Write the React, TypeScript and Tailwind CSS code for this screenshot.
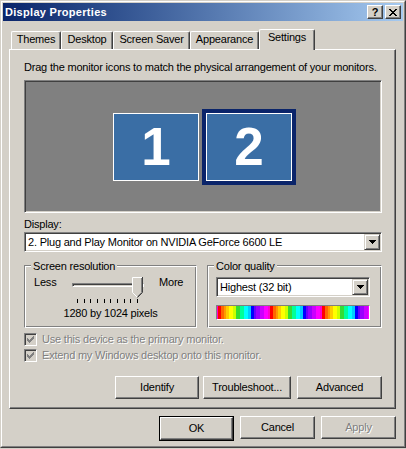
import React from "react";

const cycle: [string, number][] = [
  ["#ff0000", 3],
  ["#ff6600", 3],
  ["#ff9900", 2],
  ["#ffcc00", 3],
  ["#ffff00", 4],
  ["#ccff00", 3],
  ["#33dd33", 4],
  ["#00ff99", 4],
  ["#00ffff", 4],
  ["#00ccff", 3],
  ["#0000ff", 3],
  ["#6600ff", 2],
  ["#9900ff", 4],
  ["#cc00ff", 4],
  ["#ff00ff", 4],
  ["#ff00cc", 2],
];
const stripes: [string, number][] = [["#ff00cc", 1], ...cycle, ...cycle, ...cycle];

const xPixels = [
  "XX....XX",
  ".XX..XX.",
  "..XXXX..",
  "...XX...",
  "..XXXX..",
  ".XX..XX.",
  "XX....XX",
];
const checkPixels = [
  "......X",
  ".....XX",
  "X...XXX",
  "XX.XXX.",
  "XXXXX..",
  ".XXX...",
  "..X....",
];

function PixelGlyph({ rows, color }: { rows: string[]; color: string }) {
  const w = rows[0].length;
  const h = rows.length;
  return (
    <svg width={w} height={h} viewBox={`0 0 ${w} ${h}`} shapeRendering="crispEdges">
      {rows.flatMap((r, y) =>
        r.split("").map((c, x) => (c === "X" ? <rect key={`${x}-${y}`} x={x} y={y} width={1} height={1} fill={color} /> : null))
      )}
    </svg>
  );
}

function CaptionBtn({ children, className }: { children: React.ReactNode; className?: string }) {
  return (
    <div
      className={`w-[16px] h-[14px] bg-[#d4d0c8] border border-t-white border-l-white border-r-[#404040] border-b-[#404040] shadow-[inset_-1px_-1px_#808080] flex items-center justify-center text-black ${className ?? ""}`}
    >
      {children}
    </div>
  );
}

function Tab({ className, children }: { className: string; children: React.ReactNode }) {
  return (
    <div
      className={`h-[18px] bg-[#d4d0c8] border-t border-l border-r border-t-white border-l-white border-r-[#404040] shadow-[inset_-1px_0_#808080] rounded-t-[2px] text-center pt-px whitespace-nowrap ${className}`}
    >
      {children}
    </div>
  );
}

function Button({
  className,
  children,
  disabled,
}: {
  className: string;
  children: React.ReactNode;
  disabled?: boolean;
}) {
  return (
    <div
      className={`h-[23px] bg-[#d4d0c8] border border-t-white border-l-white border-r-[#404040] border-b-[#404040] shadow-[inset_-1px_-1px_#808080] flex items-center justify-center whitespace-nowrap ${
        disabled ? "text-[#808080] [text-shadow:1px_1px_0_#ffffff]" : "text-black"
      } ${className}`}
    >
      {children}
    </div>
  );
}

function DropBtn() {
  return (
    <div className="w-[16px] h-full bg-[#d4d0c8] border border-t-[#d4d0c8] border-l-[#d4d0c8] border-r-[#404040] border-b-[#404040] shadow-[inset_1px_1px_#ffffff,inset_-1px_-1px_#808080] flex items-center justify-center">
      <svg width="7" height="4" viewBox="0 0 7 4" shapeRendering="crispEdges">
        <rect x="0" y="0" width="7" height="1" fill="#000" />
        <rect x="1" y="1" width="5" height="1" fill="#000" />
        <rect x="2" y="2" width="3" height="1" fill="#000" />
        <rect x="3" y="3" width="1" height="1" fill="#000" />
      </svg>
    </div>
  );
}

function Combo({ className, children }: { className: string; children: React.ReactNode }) {
  return (
    <div
      className={`flex bg-white border border-t-[#808080] border-l-[#808080] border-r-white border-b-white shadow-[inset_1px_1px_#404040,inset_-1px_-1px_#d4d0c8] p-px ${className}`}
    >
      <div className="flex-1 flex items-center pl-[2px] whitespace-nowrap overflow-hidden">{children}</div>
      <DropBtn />
    </div>
  );
}

function Check() {
  return (
    <div className="w-[13px] h-[13px] shrink-0 bg-[#d4d0c8] border border-t-[#808080] border-l-[#808080] border-r-white border-b-white shadow-[inset_1px_1px_#404040,inset_-1px_-1px_#d4d0c8] flex items-center justify-center">
      <PixelGlyph rows={checkPixels} color="#808080" />
    </div>
  );
}

function GroupBox({
  className,
  label,
  children,
}: {
  className: string;
  label: string;
  children: React.ReactNode;
}) {
  return (
    <div
      className={`relative h-[63px] border border-t-[#808080] border-l-[#808080] border-r-white border-b-white shadow-[inset_1px_1px_#ffffff,inset_-1px_-1px_#808080] ${className}`}
    >
      <span className="absolute left-[6px] top-[-6px] px-[2px] bg-[#d4d0c8] leading-[13px] whitespace-nowrap">
        {label}
      </span>
      {children}
    </div>
  );
}

function Monitor({ n }: { n: string }) {
  return (
    <div className="w-[86px] h-[68px] border border-white bg-[#3a6ea5] flex items-center justify-center text-white font-bold text-[53px] leading-none tracking-normal">
      {n}
    </div>
  );
}

export default function App() {
  return (
    <div className="w-[406px] h-[449px] bg-[#d4d0c8] font-['Liberation_Sans',Arial,sans-serif] text-[11px] leading-[13px] tracking-[-0.2px] text-black select-none">
      <div className="w-[406px] h-[448px] border border-t-[#d4d0c8] border-l-[#d4d0c8] border-r-[#404040] border-b-[#404040]">
        <div className="h-full border border-t-white border-l-white border-r-[#808080] border-b-[#808080] p-px flex flex-col">
          {/* Title bar */}
          <div className="h-[18px] shrink-0 flex items-center bg-linear-to-r from-[#0a246a] to-[#a6caf0] pl-[2px] pr-[2px]">
            <span className="flex-1 text-white font-bold text-[11px] tracking-[0.3px]">Display Properties</span>
            <CaptionBtn>
              <span className="font-bold text-[11px] leading-none tracking-normal">?</span>
            </CaptionBtn>
            <CaptionBtn className="ml-[2px]">
              <PixelGlyph rows={xPixels} color="#000" />
            </CaptionBtn>
          </div>

          {/* Tabs */}
          <div className="flex items-end h-[20px] mt-[8px] pl-[8px] shrink-0">
            <Tab className="w-[50px]">Themes</Tab>
            <Tab className="w-[52px]">Desktop</Tab>
            <Tab className="w-[77px]">Screen Saver</Tab>
            <Tab className="w-[69px]">Appearance</Tab>
            <div className="relative z-10 w-[56px] h-[21px] -mb-px bg-[#d4d0c8] border-t border-l border-r border-t-white border-l-white border-r-[#404040] shadow-[inset_-1px_0_#808080] rounded-t-[2px] text-center pt-px whitespace-nowrap">
              Settings
            </div>
          </div>

          {/* Panel */}
          <div className="w-[387px] h-[360px] shrink-0 ml-[6px] border border-t-white border-l-white border-r-[#404040] border-b-[#404040] shadow-[inset_-1px_-1px_#808080] pl-[14px] pt-[11px] flex flex-col">
            <div className="whitespace-nowrap">Drag the monitor icons to match the physical arrangement of your monitors.</div>

            <div className="mt-[6px] w-[358px] h-[133px] shrink-0 bg-[#808080] border border-t-[#808080] border-l-[#808080] border-r-white border-b-white shadow-[inset_1px_1px_#404040,inset_-1px_-1px_#d4d0c8] flex items-center justify-center gap-[3px] pl-[3px]">
              <Monitor n="1" />
              <div className="border-[4px] border-[#0a246a]">
                <Monitor n="2" />
              </div>
            </div>

            <div className="mt-[5px]">Display:</div>
            <Combo className="mt-px w-[358px] h-[20px]">2. Plug and Play Monitor on NVIDIA GeForce 6600 LE</Combo>

            <div className="mt-[13px] flex gap-[10px]">
              <GroupBox className="w-[173px]" label="Screen resolution">
                <div className="flex items-start pl-[9px] mt-[10px]">
                  <div className="w-[38px]">Less</div>
                  <div className="relative w-[73px] h-[27px]">
                    <div className="mt-[7px] w-[72px] h-[4px] border border-t-[#808080] border-l-[#808080] border-r-white border-b-white shadow-[inset_1px_1px_#404040]" />
                    <div className="mt-[12px] ml-[5px] w-[61px] h-[4px] flex justify-between">
                      {Array.from({ length: 10 }).map((_, i) => (
                        <div key={i} className="w-px h-[4px] bg-black" />
                      ))}
                    </div>
                    <svg
                      className="absolute left-[60px] top-[1px]"
                      width="11"
                      height="21"
                      viewBox="0 0 11 21"
                    >
                      <polygon points="0,0 11,0 11,15.5 5.5,21 0,15.5" fill="#d4d0c8" />
                      <polyline points="5,20 0.5,15.5 0.5,0.5 10,0.5" fill="none" stroke="#ffffff" strokeWidth="1" />
                      <polyline points="10.5,0 10.5,15.5 5.5,20.5" fill="none" stroke="#404040" strokeWidth="1" />
                      <polyline points="9.5,1 9.5,15.5 5.5,19.5" fill="none" stroke="#808080" strokeWidth="1" />
                    </svg>
                  </div>
                  <div className="ml-[14px]">More</div>
                </div>
                <div className="mt-[4px] text-center">1280 by 1024 pixels</div>
              </GroupBox>

              <GroupBox className="w-[175px]" label="Color quality">
                <Combo className="mt-[11px] ml-[8px] w-[154px] h-[20px]">Highest (32 bit)</Combo>
                <div className="mt-[8px] ml-[8px] w-[154px] h-[15px] border border-t-[#808080] border-l-[#808080] border-r-white border-b-white flex overflow-hidden">
                  {stripes.map(([c, w], i) => (
                    <div key={i} className="h-full shrink-0" style={{ background: c, width: w }} />
                  ))}
                </div>
              </GroupBox>
            </div>

            <div className="mt-[5px] flex flex-col gap-[3px] text-[#808080] [text-shadow:1px_1px_0_#ffffff]">
              <div className="h-[13px] flex items-center gap-[5px]">
                <Check />
                <span className="whitespace-nowrap">Use this device as the primary monitor.</span>
              </div>
              <div className="h-[13px] flex items-center gap-[5px]">
                <Check />
                <span className="whitespace-nowrap">Extend my Windows desktop onto this monitor.</span>
              </div>
            </div>

            <div className="mt-[14px] w-[358px] flex justify-end">
              <Button className="w-[84px]">Identify</Button>
              <Button className="w-[88px] ml-[4px]">Troubleshoot...</Button>
              <Button className="w-[85px] ml-[6px]">Advanced</Button>
            </div>
          </div>

          {/* Bottom buttons */}
          <div className="mt-[7px] flex justify-end pr-[7px]">
            <div className="border border-black">
              <Button className="w-[73px] h-[21px]">OK</Button>
            </div>
            <Button className="w-[75px] ml-[6px]">Cancel</Button>
            <Button className="w-[75px] ml-[6px]" disabled>
              Apply
            </Button>
          </div>
        </div>
      </div>
    </div>
  );
}
